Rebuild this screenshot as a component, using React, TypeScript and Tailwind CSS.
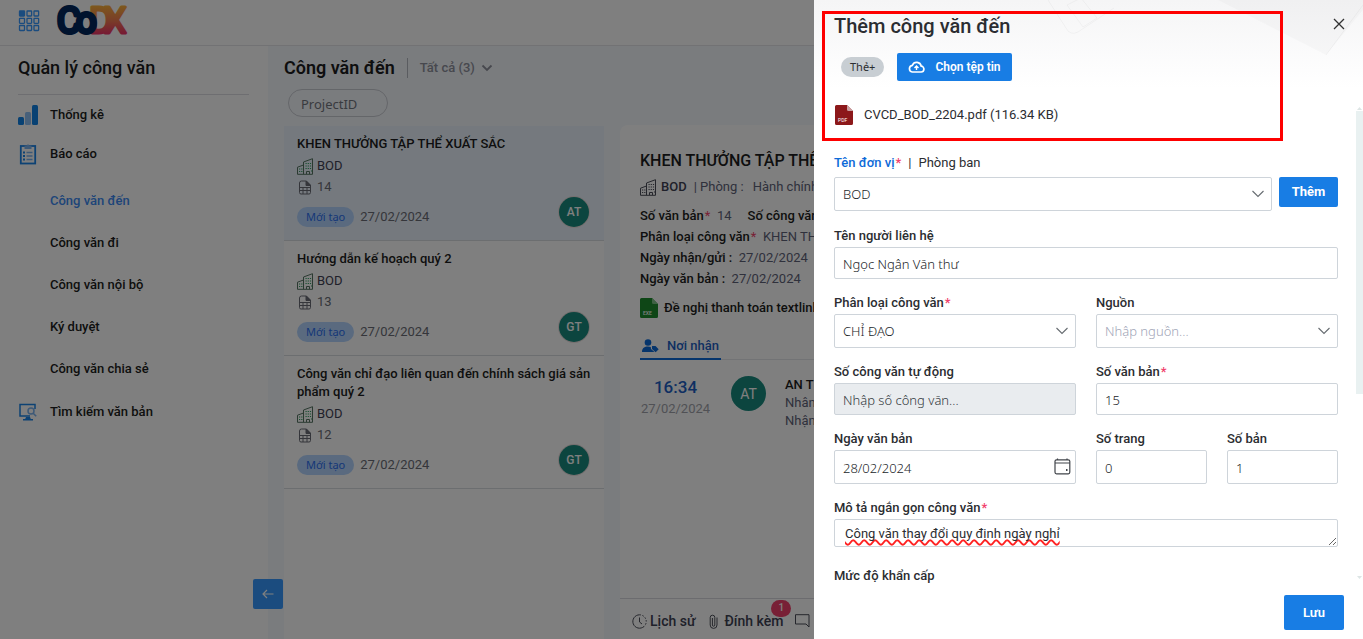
import type { ReactNode } from 'react';

type Doc = {
  title: string;
  number: string;
  owner: string;
  active?: boolean;
};

const docs: Doc[] = [
  { title: 'KHEN THƯỞNG TẬP THỂ XUẤT SẮC', number: '14', owner: 'AT', active: true },
  { title: 'Hướng dẫn kế hoạch quý 2', number: '13', owner: 'GT' },
  { title: 'Công văn chỉ đạo liên quan đến chính sách giá sản phẩm quý 2', number: '12', owner: 'GT' },
];

const subMenu = ['Công văn đến', 'Công văn đi', 'Công văn nội bộ', 'Ký duyệt', 'Công văn chia sẻ'];

const inputClass =
  "w-full rounded-xs border border-[#ced4da] bg-white px-2 pt-[2px] font-['Noto_Sans',sans-serif] text-[13px] font-light text-[#212529] outline-none placeholder:text-[#a1a5b7]";

function AppsIcon() {
  return (
    <svg width="22" height="22" viewBox="0 0 22 22" fill="none" stroke="#3699ff" strokeWidth="1.3">
      <rect x="1.500" y="1" width="5" height="5" rx="0.500" fill="#3699ff" />
      <rect x="9" y="1" width="4.600" height="5" rx="0.500" />
      <rect x="16" y="1" width="4.600" height="5" rx="0.500" />
      <rect x="1.500" y="8.300" width="5" height="5" rx="0.500" />
      <rect x="9" y="8.300" width="4.600" height="5" rx="0.500" />
      <rect x="16" y="8.300" width="4.600" height="5" rx="0.500" />
      <rect x="1.500" y="15.500" width="5" height="5" rx="0.500" />
      <rect x="9" y="15.500" width="4.600" height="5" rx="0.500" />
      <rect x="16" y="15.500" width="4.600" height="5" rx="0.500" />
    </svg>
  );
}

function Logo() {
  return (
    <svg
      width="72"
      height="34"
      viewBox="0 0 72 34"
      className="overflow-visible font-['Roboto',sans-serif] font-normal"
      strokeLinejoin="round"
      strokeLinecap="round"
      strokeWidth="4"
      aria-label="CoDX"
    >
      <defs>
        <linearGradient id="warm" gradientUnits="userSpaceOnUse" x1="0" y1="2" x2="0" y2="31">
          <stop offset="0" stopColor="#fbb03b" />
          <stop offset="0.5" stopColor="#f37b50" />
          <stop offset="1" stopColor="#ec2f6a" />
        </linearGradient>
      </defs>
      <text x="33" y="29" fontSize="36" fill="url(#warm)" stroke="url(#warm)" strokeWidth="3">D</text>
      <text x="48" y="29" fontSize="36" fill="url(#warm)" stroke="url(#warm)" strokeWidth="3">X</text>
      <text x="1" y="29" fontSize="36" fill="#00265c" stroke="#00265c">C</text>
      <text x="20" y="29" fontSize="36" fill="#00265c" stroke="#00265c">o</text>
    </svg>
  );
}

function ChartIcon() {
  return (
    <svg width="20" height="20" viewBox="0 0 20 20">
      <rect x="0" y="12" width="6" height="8" rx="1.5" fill="#1183e6" />
      <rect x="7" y="7" width="6" height="13" rx="1.5" fill="#8fc0f5" />
      <rect x="14" y="0" width="6" height="20" rx="1.5" fill="#1183e6" />
    </svg>
  );
}

function ReportIcon() {
  return (
    <svg width="20" height="22" viewBox="0 0 20 22" fill="none">
      <rect x="2.8" y="3" width="14.4" height="17.5" stroke="#1b84e8" strokeWidth="1.8" />
      <path d="M6.500 2.500h2a1.600 1.600 0 0 1 3 0h2V6h-7z" fill="#7ab2ee" />
      <path d="M8.500 9.500h6M8.500 13h6M8.500 16.500h6" stroke="#7ab2ee" strokeWidth="1.3" />
      <path d="M5 9.500h2M5 13h2M5 16.500h2" stroke="#1b84e8" strokeWidth="2" />
    </svg>
  );
}

function SearchDocIcon() {
  return (
    <svg width="20" height="18" viewBox="0 0 20 18" fill="none">
      <path d="M17 6V1.600H2v11.300h10" stroke="#1b84e8" strokeWidth="1.5" />
      <circle cx="13" cy="8" r="3" stroke="#7ab2ee" strokeWidth="1.5" />
      <path d="M15.200 10.200l3 3" stroke="#7ab2ee" strokeWidth="1.6" />
      <path d="M8 14h4l.8 2H15v1.500H5V16h2.200z" fill="#1b84e8" />
    </svg>
  );
}

function BuildingIcon({ color, dots }: { color: string; dots: string }) {
  return (
    <svg width="16" height="17" viewBox="0 0 16 17" fill="none" className="shrink-0">
      <path d="M.5 16.300V9.200L6.500 7v9.300zM6.500 16.300V4L15.500.7v15.600zM9.500 16v-2.500h3V16" stroke={color} />
      <path
        d="M8.500 5.500h6M8.500 8h6M8.500 10.500h6M2 11h4M2 13.500h4M14 13h1"
        stroke={dots}
        strokeWidth="1.2"
        strokeDasharray="1.200 1"
      />
    </svg>
  );
}

function SheetIcon() {
  return (
    <svg width="14" height="15" viewBox="0 0 14 15" fill="none" stroke="#6a6d76" className="shrink-0">
      <path d="M1.500 3A2 2 0 0 1 3.500 1h5l4 4v7.500a1.500 1.500 0 0 1-1.500 1.500H3a1.500 1.500 0 0 1-1.500-1.500z" />
      <path d="M8 1v4.500h4.500z" fill="#6a6d76" />
      <path d="M1.500 7.500h11M1.500 10.500h11M5 7.500V14M9 7.500V14" />
    </svg>
  );
}

function FileIcon({ label, color, fold }: { label: string; color: string; fold: string }) {
  return (
    <svg width="18" height="20" viewBox="0 0 18 20" className="shrink-0">
      <path d="M1.500 0H12l6 6v12.500a1.500 1.500 0 0 1-1.500 1.500h-15A1.500 1.500 0 0 1 0 18.500v-17A1.500 1.500 0 0 1 1.500 0z" fill={color} />
      <path d="M12 0l6 6h-4.500A1.500 1.500 0 0 1 12 4.500z" fill={fold} />
      <text x="3" y="17" fontSize="5" fill="#fff" fontFamily="Roboto, sans-serif">{label}</text>
    </svg>
  );
}

function Chevron({ className }: { className?: string }) {
  return (
    <svg width="14" height="8" viewBox="0 0 14 8" fill="none" stroke="#666b70" strokeWidth="1.1" className={className}>
      <path d="M1.500 1L7 6.500 12.500 1" />
    </svg>
  );
}

function Avatar({ name }: { name: string }) {
  return (
    <span className="mr-[2px] flex size-[30px] shrink-0 items-center justify-center rounded-full bg-[#198b7f] text-xs font-medium text-white shadow-[0_0_0_1px_#eadfdf]">
      {name}
    </span>
  );
}

function Header() {
  return (
    <header className="flex h-[46px] shrink-0 items-center gap-4 border-b border-[#e4e4e8] bg-white px-[18px] pb-1">
      <button aria-label="Ứng dụng"><AppsIcon /></button>
      <Logo />
    </header>
  );
}

function Sidebar() {
  return (
    <nav className="w-[268px] shrink-0 bg-white pl-[18px] pr-[19px] text-[13px] font-medium text-[#1c1d20]">
      <h2 className="border-b border-[#dcdde2] pb-[13px] pt-[9px] text-lg leading-[26px]">Quản lý công văn</h2>
      <a href="#" className="flex h-[39px] items-center gap-3"><ChartIcon />Thống kê</a>
      <a href="#" className="flex h-[39px] items-center gap-3"><ReportIcon />Báo cáo</a>
      <ul className="pt-[7px]">
        {subMenu.map((name, i) => (
          <li key={name}>
            <a href="#" className={`flex h-[42px] items-center pl-8 ${i === 0 ? 'text-[#3d8bf2]' : ''}`}>
              {name}
            </a>
          </li>
        ))}
      </ul>
      <a href="#" className="flex h-11 items-center gap-3"><SearchDocIcon />Tìm kiếm văn bản</a>
    </nav>
  );
}

function DocItem({ doc }: { doc: Doc }) {
  return (
    <li className={`border-b border-[#d8dce0] px-[13px] pb-[13px] pt-[9px] ${doc.active ? 'bg-[#eaf3fd]' : 'bg-white'}`}>
      <h3 className="mb-[3px] text-[13px] font-medium leading-[18px] text-[#1c1d20]">{doc.title}</h3>
      <div className="flex items-end justify-between">
        <div className="text-[13px] leading-5 text-[#5e6278]">
          <p className="flex items-center gap-1 text-[#3f4254]"><BuildingIcon color="#567563" dots="#2fa060" />BOD</p>
          <p className="mt-px flex items-center gap-[5px] pl-px text-[#6a6d76]"><SheetIcon />{doc.number}</p>
          <p className="mt-[10px] flex items-center gap-[6px] text-[#6a6d76]">
            <span className="h-5 rounded-full bg-[#b4d5ff] px-[9px] font-['Noto_Sans',sans-serif] text-[11px] text-[#2b6ff0]">Mới tạo</span>
            27/02/2024
          </p>
        </div>
        <Avatar name={doc.owner} />
      </div>
    </li>
  );
}

function DocList() {
  return (
    <section className="flex w-[352px] shrink-0 flex-col bg-[#f5f8fc] px-4">
      <div className="flex items-center gap-3 pt-2">
        <h1 className="text-lg font-semibold leading-7 text-[#1c1d20]">Công văn đến</h1>
        <button className="flex h-5 items-center gap-[6px] border-l border-[#b5b8c0] pl-3 text-[13px] font-medium text-[#8e919c]">
          Tất cả (3)
          <svg width="12" height="8" viewBox="0 0 12 8" fill="none" stroke="#8e919c" strokeWidth="1.800"><path d="M1.500 1.500L6 6l4.500-4.500" /></svg>
        </button>
      </div>
      <input
        aria-label="ProjectID"
        placeholder="ProjectID"
        className="ml-1 mt-[7px] h-7 w-[100px] rounded-full border border-[#c9ccd3] px-3 pt-px font-['Noto_Sans',sans-serif] text-[13px] placeholder:text-[#73767f]"
      />
      <ul className="mt-[9px] flex-1 bg-white">
        {docs.map((doc) => <DocItem key={doc.number} doc={doc} />)}
      </ul>
    </section>
  );
}

function Req() {
  return <span className="ml-px text-[#f1416c]">*</span>;
}

function DocDetail() {
  return (
    <section className="flex min-w-0 flex-1 flex-col overflow-hidden bg-[#f5f8fc] pt-[79px]">
      <div className="flex flex-1 flex-col whitespace-nowrap rounded-tl-lg bg-white text-[13px] text-[#5e6278]">
        <div className="flex-1 px-5 pt-6">
          <h2 className="text-base font-medium leading-6 text-[#1c1d20]">KHEN THƯỞNG TẬP THỂ XUẤT SẮC</h2>
          <p className="mt-1 flex items-center gap-[5px] leading-5">
            <BuildingIcon color="#4a4d58" dots="#4a4d58" />
            <b className="font-medium text-[#3f4254]">BOD</b>
            <span className="pl-[2px]">| Phòng :</span>
            <span className="pl-1">Hành chính</span>
          </p>
          <div className="mt-2 leading-[21px]">
            <p className="flex gap-4">
              <span><b className="font-medium text-[#1c1d20]">Số văn bản</b><Req /> &nbsp;14</span>
              <b className="font-medium text-[#1c1d20]">Số công văn đến</b>
            </p>
            <p><b className="font-medium text-[#1c1d20]">Phân loại công văn</b><Req /> &nbsp;KHEN THƯỞNG</p>
            <p><b className="font-medium text-[#1c1d20]">Ngày nhận/gửi :</b> &nbsp;27/02/2024</p>
            <p><b className="font-medium text-[#1c1d20]">Ngày văn bản :</b> &nbsp;27/02/2024</p>
          </div>
          <p className="mt-[9px] flex items-center gap-[6px] font-medium text-[#1c1d20]">
            <FileIcon label="EXE" color="#1c8c2c" fold="#7cc387" />
            Đề nghị thanh toán textlink
          </p>
          <div className="mt-3 border-b border-[#e4e6ea]">
            <button className="-mb-px flex h-[30px] items-center gap-2 border-b-2 border-[#0d6ad8] px-[2px] pt-1 font-medium text-[#1d5fc4]">
              <svg width="17" height="14" viewBox="0 0 17 14" fill="#0d6ad8">
                <circle cx="6" cy="3.500" r="3.300" />
                <path d="M0 13c0-4 2.500-5.500 6-5.500 1.200 0 2 .2 2.800.6L9 10l3.500 3z" />
                <path d="M10 7h3.500l3.200 3.200-3 3L10 10z" />
              </svg>
              Nơi nhận
            </button>
          </div>
          <div className="mt-4 flex items-start">
            <p className="w-[71px] text-center leading-[22px] text-[#a1a3ab]">
              <span className="block text-[17px] font-medium text-[#1d5fc4]">16:34</span>
              27/02/2024
            </p>
            <span className="ml-5 flex size-[35px] items-center justify-center rounded-full bg-[#198b7f] text-sm text-white">AT</span>
            <p className="ml-[19px] leading-[18px]">
              <b className="block font-medium text-[#1c1d20]">AN T</b>
              Nhân
              <br />
              Nhận
            </p>
          </div>
        </div>
        <footer className="flex h-[41px] items-center border-t border-[#d8d9de] px-3 pt-1 text-sm font-medium text-[#3f4254]">
          <button className="flex items-center gap-[3px]">
            <svg width="15" height="15" viewBox="0 0 15 15" fill="none" stroke="#4a4d58">
              <path d="M7.500.8a6.700 6.700 0 1 0 4.500 11.700" />
              <path d="M7.500.8a6.700 6.700 0 0 1 4.500 11.700" strokeDasharray="1.500 1.500" />
              <path d="M7.500 3.500V8l2.500 2" />
            </svg>
            Lịch sử
          </button>
          <button className="relative ml-[14px] flex items-center gap-[6px]">
            <svg width="9" height="15" viewBox="0 0 9 15" fill="none" stroke="#4a4d58">
              <path d="M8 3.500v7.500a3.300 3.300 0 0 1-6.800 0V3.500a2.300 2.300 0 0 1 4.600 0V11a1.200 1.200 0 0 1-2.400 0V4" />
            </svg>
            Đính kèm
            <span className="absolute -right-2 -top-[11px] flex h-[17px] w-5 items-center justify-center rounded-full bg-[#f1416c] text-[10px] text-white">1</span>
          </button>
          <button aria-label="Bình luận" className="ml-3">
            <svg width="15" height="14" viewBox="0 0 15 14" fill="none" stroke="#4a4d58"><path d="M.5.700h13.500v12.300l-3-3H.5z" /></svg>
          </button>
        </footer>
      </div>
    </section>
  );
}

type FieldProps = {
  id: string;
  label: string;
  required?: boolean;
  className?: string;
  children?: ReactNode;
};

function Field({ id, label, required, className, children }: FieldProps) {
  return (
    <div className={className}>
      <label htmlFor={id} className="mb-px block pt-px text-[13px] font-medium leading-5">
        {label}
        {required && <Req />}
      </label>
      {children}
    </div>
  );
}

function SelectBox({ id, value, muted }: { id: string; value: string; muted?: boolean }) {
  return (
    <div className="relative">
      <select id={id} className={`${inputClass} h-[34px] appearance-none ${muted ? 'text-[#a1a5b7]' : ''}`}>
        <option>{value}</option>
      </select>
      <Chevron className="pointer-events-none absolute right-[7px] top-[13px]" />
    </div>
  );
}

function AddDocDrawer() {
  return (
    <aside className="absolute inset-y-0 right-0 flex w-[549px] flex-col bg-white bg-linear-to-b from-[#f5f5f6] to-white to-[88px] text-[#2b2d31]">
      <svg width="340" height="90" viewBox="0 0 340 90" className="pointer-events-none absolute right-0 top-0">
        <path d="M195 0h145v10l-37 45z" fill="#000" opacity="0.02" />
        <path d="M303 55L340 5M25 0l18 28q4 8 12 4l36-24M44 5l14-7 16 20-14 9z" fill="none" stroke="#000" opacity="0.035" />
      </svg>
      <div className="flex items-center justify-between pl-5 pr-[18px] pt-3">
        <h2 className="text-xl font-medium leading-7">Thêm công văn đến</h2>
        <button aria-label="Đóng" className="-mt-1">
          <svg width="12" height="12" viewBox="0 0 12 12" fill="none" stroke="#333" strokeWidth="1.300"><path d="M1 1l10 10M11 1L1 11" /></svg>
        </button>
      </div>
      <div className="mt-[13px] flex items-center gap-[13px] pl-[27px]">
        <button className="h-5 rounded-full bg-[#c8ced3] px-[9px] font-['Noto_Sans',sans-serif] text-[11px]">Thẻ+</button>
        <button className="flex h-7 items-center gap-[10px] rounded-xs bg-[#187de4] px-[11px] text-xs font-semibold text-white">
          <svg width="17" height="12" viewBox="0 0 17 12" fill="none" stroke="#fff" strokeWidth="1.700">
            <path d="M4.200 11h8.600a2.900 2.900 0 0 0 .4-5.800A4.600 4.600 0 0 0 4.400 4.300 3.400 3.400 0 0 0 4.200 11z" />
            <path d="M8.500 9V5.500M6.500 7l2-2 2 2" strokeWidth="1.400" />
          </svg>
          Chọn tệp tin
        </button>
      </div>
      <div className="mt-[22px] flex min-h-0 flex-1">
        <form className="min-w-0 flex-1 overflow-hidden pl-5 pr-[17px]">
          <p className="mt-[2px] flex h-5 items-center gap-[11px] pl-px text-[13px]">
            <FileIcon label="PDF" color="#8c181a" fold="#c9a0a1" />
            CVCD_BOD_2204.pdf (116.34 KB)
          </p>
          <div className="mt-7 text-[13px] leading-5">
            <label htmlFor="unit" className="font-medium text-[#0d6ad8]">Tên đơn vị<Req /></label>
            <span className="px-[7px]">|</span>
            <button type="button">Phòng ban</button>
          </div>
          <div className="mt-1 flex gap-[7px]">
            <div className="flex-1"><SelectBox id="unit" value="BOD" /></div>
            <button type="button" className="h-[30px] w-[59px] rounded-xs bg-[#187de4] text-[13px] font-bold text-white">Thêm</button>
          </div>
          <div className="mt-[14px] grid grid-cols-4 gap-x-5 gap-y-[13px]">
            <Field id="contact" label="Tên người liên hệ" className="col-span-4">
              <input id="contact" defaultValue="Ngọc Ngân Văn thư" className={`${inputClass} h-8`} />
            </Field>
            <Field id="category" label="Phân loại công văn" required className="col-span-2">
              <SelectBox id="category" value="CHỈ ĐẠO" />
            </Field>
            <Field id="source" label="Nguồn" className="col-span-2">
              <SelectBox id="source" value="Nhập nguồn..." muted />
            </Field>
            <Field id="autoNo" label="Số công văn tự động" className="col-span-2">
              <input id="autoNo" disabled placeholder="Nhập số công văn..." className="h-8 w-full rounded-xs border border-[#ced4da] bg-[#e9ecef] px-2 pt-px font-['Noto_Sans',sans-serif] text-[13px] font-light placeholder:text-[#343a40]" />
            </Field>
            <Field id="docNo" label="Số văn bản" required className="col-span-2">
              <input id="docNo" defaultValue="15" className={`${inputClass} h-8`} />
            </Field>
            <Field id="docDate" label="Ngày văn bản" className="col-span-2">
              <div className="relative">
                <input id="docDate" defaultValue="28/02/2024" className={`${inputClass} h-[34px]`} />
                <svg width="17" height="17" viewBox="0 0 17 17" fill="none" stroke="#40444a" strokeWidth="1.200" className="absolute right-[5px] top-2">
                  <rect x="1" y="1.800" width="14.800" height="14" rx="1.500" />
                  <path d="M1 5h14.800M3.500.500v1.500M13 .500v1.500" />
                  <path d="M12 12h1.500" strokeWidth="1.800" />
                </svg>
              </div>
            </Field>
            <Field id="pages" label="Số trang">
              <input id="pages" defaultValue="0" className={`${inputClass} h-[34px]`} />
            </Field>
            <Field id="copies" label="Số bản">
              <input id="copies" defaultValue="1" className={`${inputClass} h-[34px]`} />
            </Field>
            <Field id="summary" label="Mô tả ngắn gọn công văn" required className="col-span-4">
              <textarea
                id="summary"
                rows={1}
                defaultValue="Công văn thay đổi quy định ngày nghỉ"
                className="block h-7 w-full resize-y overflow-hidden rounded-xs border border-[#ced4da] bg-white px-[10px] py-1 text-[13px] leading-5 underline decoration-[#f22] decoration-wavy decoration-2 underline-offset-1 outline-none [text-decoration-skip-ink:none]"
              />
            </Field>
            <p className="col-span-4 mt-[6px] text-[13px] font-medium leading-5">Mức độ khẩn cấp</p>
          </div>
        </form>
        <div className="flex w-2 flex-col items-center py-1">
          <svg width="5" height="3" viewBox="0 0 5 3" fill="#dde5e5"><path d="M0 3L2.500 0 5 3z" /></svg>
          <div className="mt-px h-3/5 w-[7px] bg-[#e9f1f1]" />
          <svg width="5" height="3" viewBox="0 0 5 3" fill="#dde5e5" className="mt-auto"><path d="M0 0l2.500 3L5 0z" /></svg>
        </div>
      </div>
      <div className="flex justify-end pb-[9px] pr-[19px] pt-3">
        <button className="h-[35px] w-[60px] rounded-xs bg-[#187de4] text-[13px] font-semibold text-white">Lưu</button>
      </div>
      {/* highlight around the upload block */}
      <div className="pointer-events-none absolute left-2 right-20 top-[11px] h-[130px] border-3 border-[#fe0000]" />
    </aside>
  );
}

export default function App() {
  return (
    <div className="relative flex h-screen flex-col overflow-hidden bg-white font-['Roboto',sans-serif]">
      <Header />
      <div className="flex min-h-0 flex-1">
        <Sidebar />
        <DocList />
        <DocDetail />
      </div>
      <button aria-label="Thu gọn menu" className="absolute bottom-[30px] left-[253px] flex size-[30px] items-center justify-center rounded-xs bg-[#3699ff]">
        <svg width="12" height="10" viewBox="0 0 12 10" fill="none" stroke="#fff" strokeWidth="1.200"><path d="M11.500 5H1M5 1L1 5l4 4" /></svg>
      </button>
      <div className="absolute inset-0 bg-black/50" />
      <AddDocDrawer />
    </div>
  );
}
